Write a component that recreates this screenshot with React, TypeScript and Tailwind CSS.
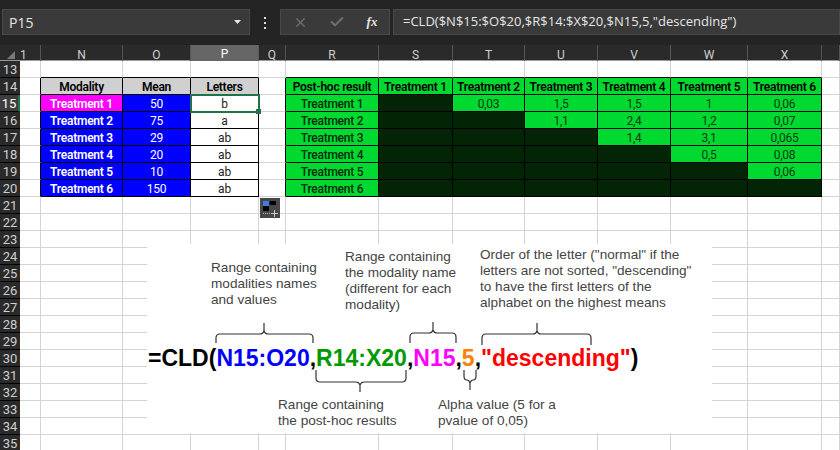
import { Check, X } from "lucide-react";

const columnLetters = ["1", "N", "O", "P", "Q", "R", "S", "T", "U", "V", "W", "X", ""];
const rowNumbers = Array.from({ length: 23 }, (_, i) => i + 13);
const gridCols = "grid grid-cols-[20px_21px_82px_68px_68px_27px_93px_74px_72px_73px_73px_77px_74px_18px]";

const meanTable: Record<number, string[]> = {
	14: ["Modality", "Mean", "Letters"],
	15: ["Treatment 1", "50", "b"],
	16: ["Treatment 2", "75", "a"],
	17: ["Treatment 3", "29", "ab"],
	18: ["Treatment 4", "20", "ab"],
	19: ["Treatment 5", "10", "ab"],
	20: ["Treatment 6", "150", "ab"],
};

const postHocTable: Record<number, string[]> = {
	14: ["Post-hoc result", "Treatment 1", "Treatment 2", "Treatment 3", "Treatment 4", "Treatment 5", "Treatment 6"],
	15: ["Treatment 1", "", "0,03", "1,5", "1,5", "1", "0,06"],
	16: ["Treatment 2", "", "", "1,1", "2,4", "1,2", "0,07"],
	17: ["Treatment 3", "", "", "", "1,4", "3,1", "0,065"],
	18: ["Treatment 4", "", "", "", "", "0,5", "0,08"],
	19: ["Treatment 5", "", "", "", "", "", "0,06"],
	20: ["Treatment 6", "", "", "", "", "", ""],
};

function Note({ className, lines }: { className: string; lines: string[] }) {
	return (
		<div className={`absolute whitespace-nowrap text-[13.6px] leading-[16px] text-[#444444] font-['Liberation_Sans',sans-serif] ${className}`}>
			{lines.map((line) => (
				<div key={line}>{line}</div>
			))}
		</div>
	);
}

function Braces() {
	return (
		<svg className="absolute inset-0" width="565" height="189" viewBox="147 244 565 189" fill="none" stroke="#333333" strokeWidth="1.2">
			<path d="M216 343v-5q0-4 4-4h40q3 0 4-3v-8v8q1 3 4 3h41q4 0 4 4v5" />
			<path d="M410 343v-6q0-4 4-4h15q3 0 4-3v-8v8q1 3 4 3h15q4 0 4 4v6" />
			<path d="M482 345v-7q0-4 4-4h47q3 0 4-3v-8v8q1 3 4 3h46q4 0 4 4v7" />
			<path d="M316 370v8q0 4 4 4h36q3 0 4 3v7v-7q1-3 4-3h38q4 0 4-4v-8" />
			<path d="M464 370v6q0 4 3 4q2 0 3 3v7v-7q1-3 3-3q3 0 3-4v-6" />
		</svg>
	);
}

function CalloutImage() {
	return (
		<div className="absolute left-[147px] top-[244px] h-[189px] w-[565px] bg-white tracking-normal">
			<Note className="left-[64px] top-[16px]" lines={["Range containing", "modalities names", "and values"]} />
			<Note className="left-[198px] top-[5px]" lines={["Range containing", "the modality name", "(different for each", "modality)"]} />
			<Note className="left-[333px] top-[3px]" lines={["Order of the letter (\"normal\" if the", "letters are not sorted, \"descending\"", "to have the first letters of the", "alphabet on the highest means"]} />
			<Note className="left-[131px] top-[153px]" lines={["Range containing", "the post-hoc results"]} />
			<Note className="left-[291px] top-[153px]" lines={["Alpha value (5 for a", "pvalue of 0,05)"]} />
			<Braces />
			<div className="absolute left-[1px] top-[101px] whitespace-nowrap text-[23px] font-bold leading-[26px] text-black font-['Liberation_Sans',sans-serif]">
				=CLD(
				<span className="text-[#0000ff]">N15:O20</span>,
				<span className="text-[#009900]">R14:X20</span>,
				<span className="text-[#ff00ff]">N15</span>,
				<span className="text-[#ff7f00]">5</span>,
				<span className="text-[#ff0000]">"descending"</span>)
			</div>
		</div>
	);
}

function QuickAnalysis() {
	return (
		<div className="absolute left-[260px] top-[198px] h-[20px] w-[20px] bg-[#484848]">
			<svg width="20" height="20" viewBox="0 0 20 20">
				<rect x="3" y="3" width="6" height="5" fill="#3f7be0" />
				<rect x="9.5" y="3" width="6.5" height="4" fill="#000000" />
				<rect x="3" y="8" width="6" height="5" fill="#000000" />
				<path d="M3 15.5h1M5 15.5h1M7 15.5h1M9 15.5h1" stroke="#bbbbbb" />
				<path d="M14.5 12v7M11 15.5h7" stroke="#cccccc" />
			</svg>
		</div>
	);
}

function SheetCell({ row, col }: { row: number; col: number }) {
	const inMean = col >= 1 && col <= 3 && row >= 14 && row <= 20;
	const inPostHoc = col >= 5 && col <= 11 && row >= 14 && row <= 20;
	const aboveTable = row === 13 && ((col >= 1 && col <= 3) || (col >= 5 && col <= 11));
	const beforeTable = (col === 0 || col === 4) && row >= 14 && row <= 20;

	if (inMean) {
		const text = meanTable[row][col - 1];
		const selected = row === 15 && col === 3;
		let tone = "bg-[#0000ff] font-semibold text-white";
		if (row === 14) tone = "bg-[#d0d0d0] font-semibold text-black";
		else if (col === 3) tone = "bg-white text-[#222222]";
		else if (col === 2) tone = "bg-[#0000ff] text-white";
		else if (row === 15) tone = "bg-[#ff00ff] font-semibold text-white";
		return (
			<div className={`flex items-center justify-center border-r border-b border-black pt-px ${selected ? "relative" : ""} ${tone}`}>
				{text}
				{selected && (
					<div className="absolute -top-[1px] -right-[2px] -bottom-[2px] -left-[1px] border-2 border-[#217346]">
						<div className="absolute -right-[3px] -bottom-[3px] h-[5px] w-[5px] bg-[#217346]" />
					</div>
				)}
			</div>
		);
	}

	if (inPostHoc) {
		const text = postHocTable[row][col - 5];
		const isLabel = row === 14 || col === 5;
		const isEmpty = !isLabel && text === "";
		return (
			<div
				className={`flex items-center justify-center border-r border-b border-black pt-px ${
					isEmpty ? "bg-[#032506]" : "bg-[#00d92f]"
				} ${row === 14 ? "font-semibold text-black" : isLabel ? "font-medium text-[#062a0c]" : "text-[#0c3a14]"}`}
			>
				{text}
			</div>
		);
	}

	return (
		<div
			className={`border-r border-b ${aboveTable ? "border-r-[#d4d4d4] border-b-black" : "border-[#d4d4d4]"} ${
				beforeTable ? "border-r-black" : ""
			} bg-white`}
		/>
	);
}

export default function App() {
	return (
		<div className="relative h-screen overflow-hidden bg-white text-[12px] tracking-[-0.25px] font-['Roboto',sans-serif]">
			{/* Formula bar */}
			<div className="flex h-[45px] items-start bg-[#242424] pt-[9px] pl-[2px] tracking-normal">
				<div className="flex h-[26px] w-[248px] items-center justify-between border border-[#484848] bg-[#3a3a3a] pr-[8px] pl-[6px] text-[14px] text-[#e6e6e6] font-['Open_Sans',sans-serif]">
					<span>P15</span>
					<svg width="7" height="4" viewBox="0 0 7 4">
						<path d="M0 0h7L3.5 4z" fill="#e6e6e6" />
					</svg>
				</div>
				<div className="flex w-[30px] flex-col items-center gap-[3px] pt-[8px]">
					<span className="h-[2px] w-[2px] bg-[#e0e0e0]" />
					<span className="h-[2px] w-[2px] bg-[#e0e0e0]" />
					<span className="h-[2px] w-[2px] bg-[#e0e0e0]" />
				</div>
				<div className="flex h-[26px] w-[110px] items-center border border-[#484848] bg-[#3a3a3a] text-[#6f6f6f]">
					<div className="flex w-[37px] justify-center pl-[1px]">
						<X size={15} strokeWidth={2} />
					</div>
					<div className="flex w-[37px] justify-center">
						<Check size={16} strokeWidth={3} />
					</div>
					<div className="flex w-[34px] justify-center text-[13px] font-bold italic text-[#e6e6e6] font-['Liberation_Serif',serif]">fx</div>
				</div>
				<div className="ml-[3px] flex h-[26px] flex-1 items-center border border-[#484848] bg-[#3a3a3a] pl-[9px] text-[13px] text-[#e6e6e6] font-['Open_Sans',sans-serif]">
					=CLD($N$15:$O$20,$R$14:$X$20,$N15,5,"descending")
				</div>
			</div>

			{/* Column headers */}
			<div className={`${gridCols} h-[16px] border-b border-[#9a9a9a] bg-[#2a2a2a] text-[12px] tracking-normal text-[#cfcfcf]`}>
				<div className="flex items-center justify-end pr-[5px]">
					<svg width="8" height="8" viewBox="0 0 8 8">
						<path d="M8 0v8H0z" fill="#7a7a7a" />
					</svg>
				</div>
				{columnLetters.map((letter, i) => (
					<div
						key={i}
						className={`flex items-center border-r ${
							letter === "P" ? "border-[#5a5a5a] border-b-2 border-b-[#217346] bg-[#666666] text-white" : "border-[#555555]"
						} ${letter === "1" ? "justify-start" : "justify-center"}`}
					>
						{letter}
					</div>
				))}
			</div>

			{/* Sheet */}
			<div className={`${gridCols} auto-rows-[17px]`}>
				{rowNumbers.map((row) => (
					<div key={row} className="contents">
						<div
							className={`flex items-center justify-center border-b border-black pt-px text-[13px] tracking-normal ${
								row === 15 ? "border-r-2 border-r-[#217346] bg-[#3d3d3d] text-white" : "bg-[#2a2a2a] text-[#cfcfcf]"
							}`}
						>
							{row}
						</div>
						{columnLetters.map((_, col) => (
							<SheetCell key={col} row={row} col={col} />
						))}
					</div>
				))}
			</div>

			<QuickAnalysis />
			<CalloutImage />
		</div>
	);
}
